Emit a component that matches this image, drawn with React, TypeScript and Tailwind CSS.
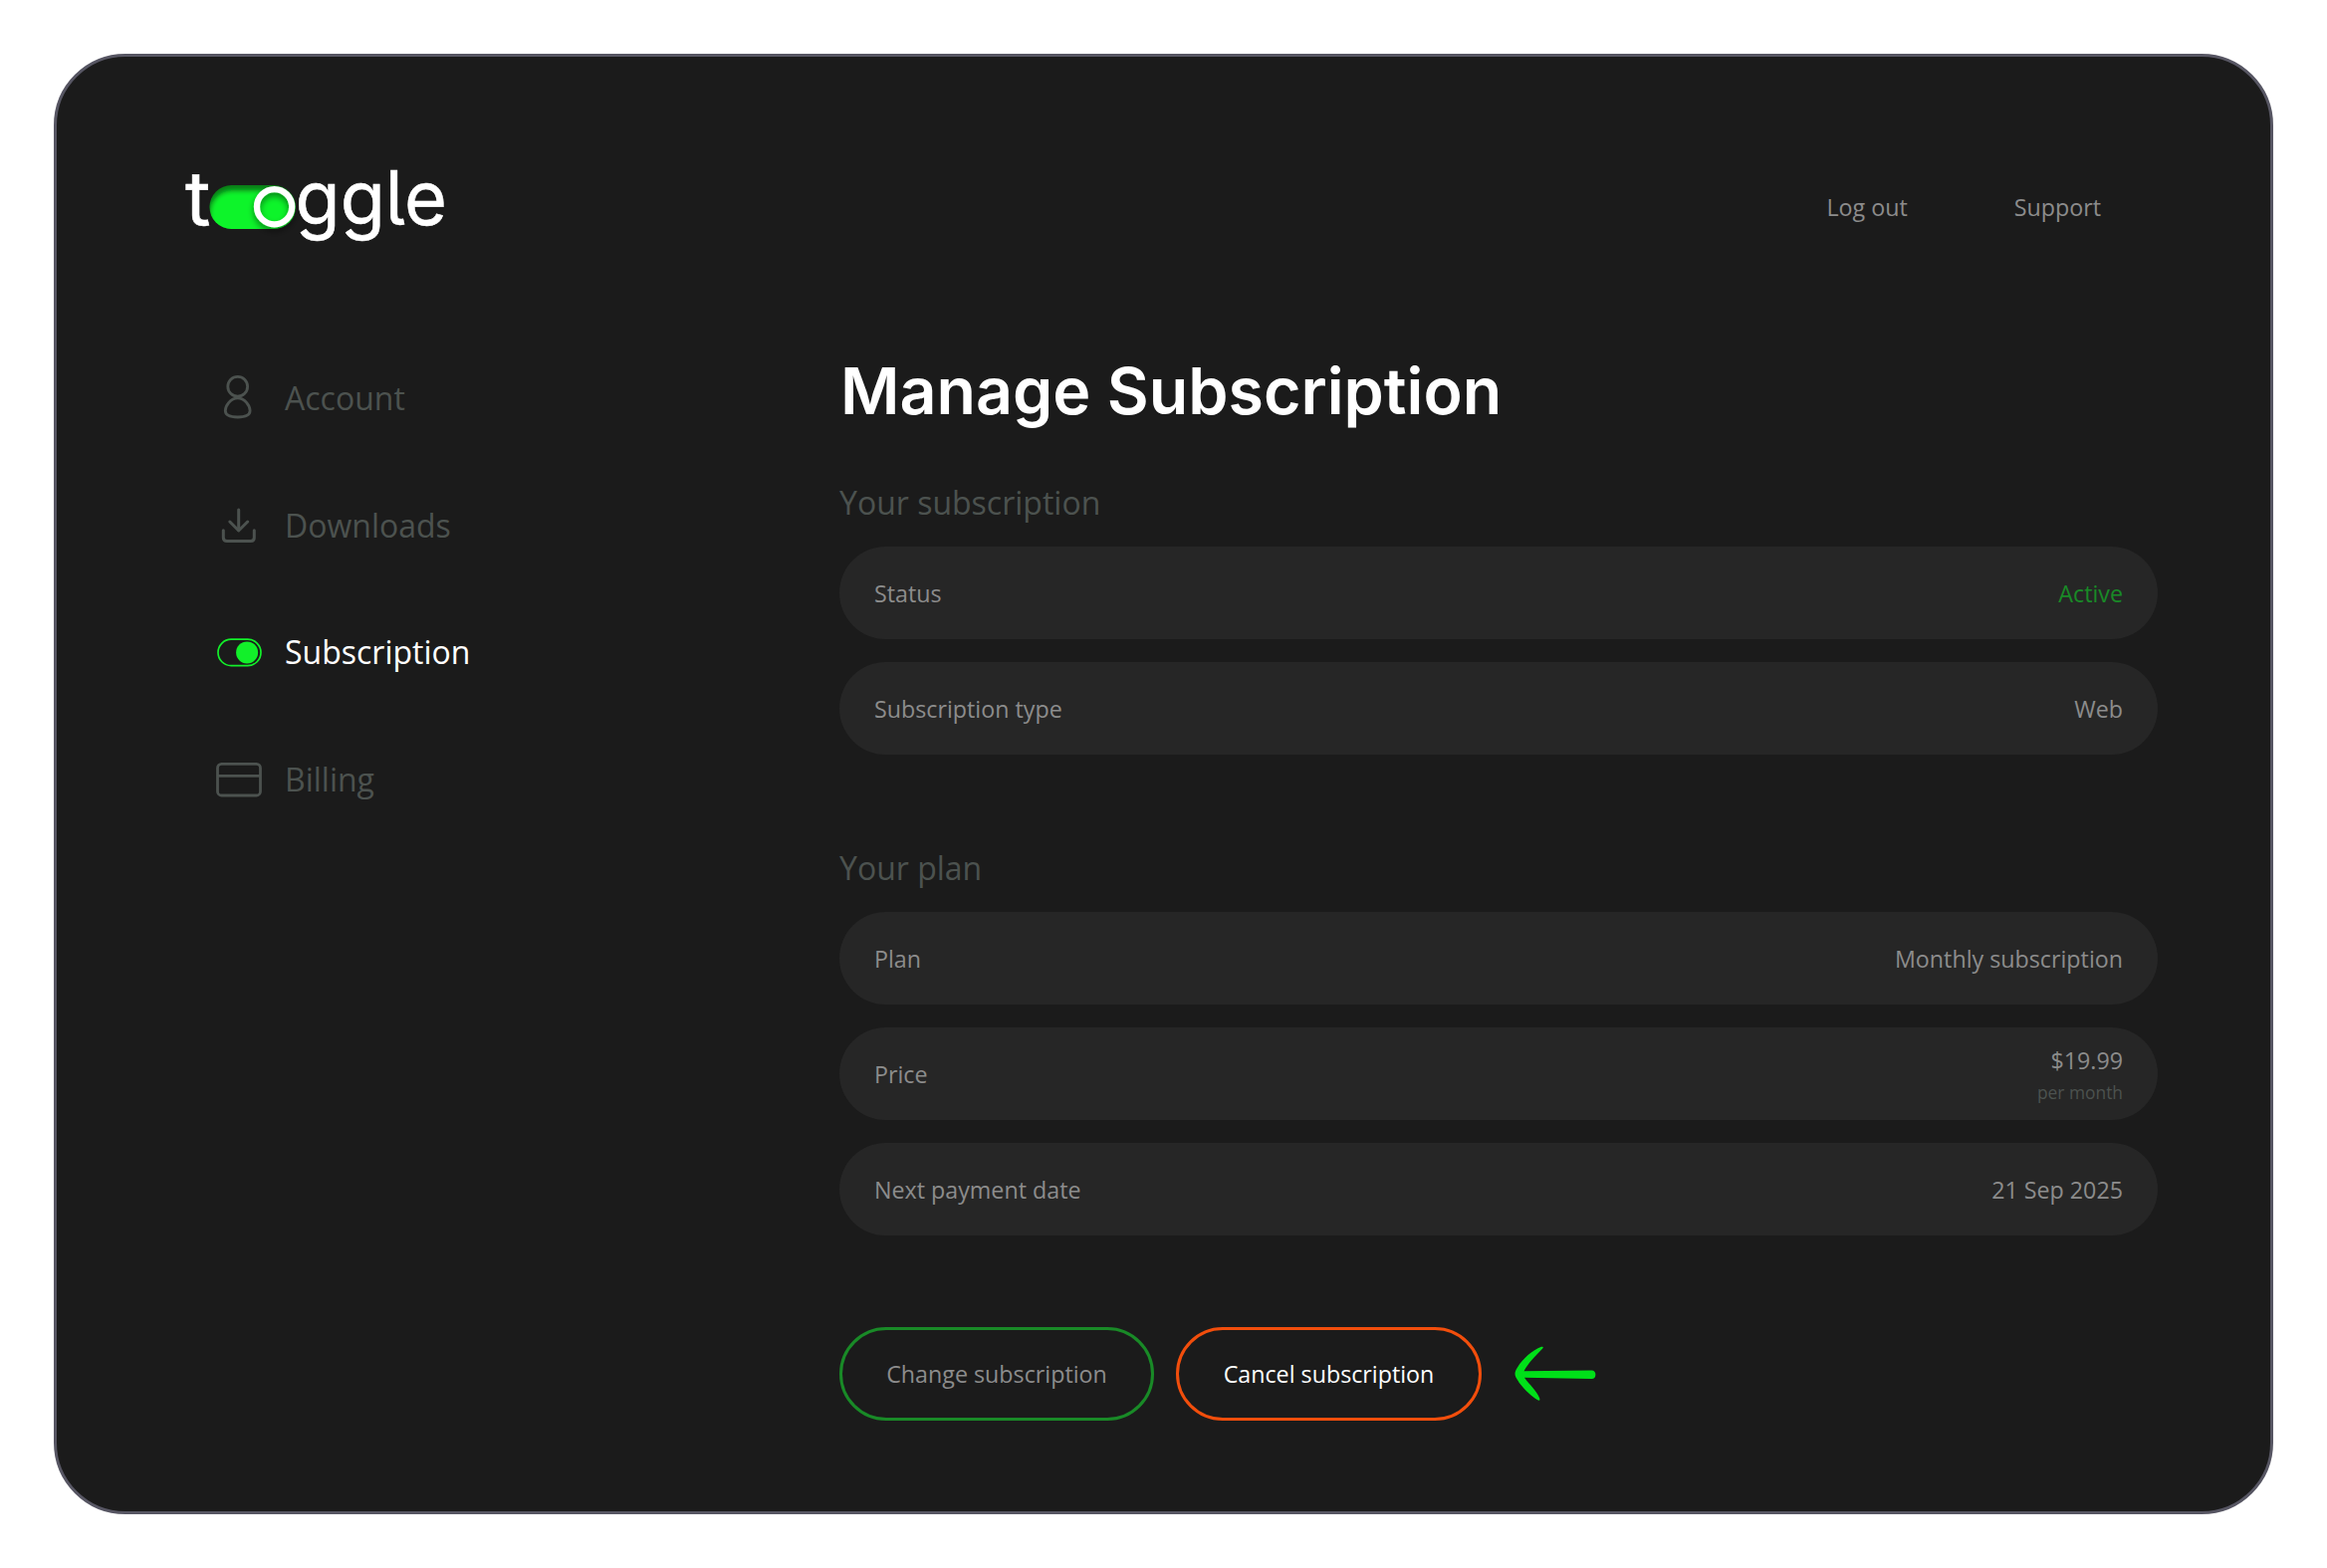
import type { ReactNode } from 'react'

interface NavItemProps {
  icon: ReactNode
  label: string
  active?: boolean
}

interface DetailRowProps {
  label: string
  value: string
  hint?: string
  highlight?: boolean
}

const Logo = () => (
  <svg width="320" height="110" viewBox="0 0 320 110" role="img" aria-label="toggle">
    <defs>
      <clipPath id="pillClip">
        <rect x="50.5" y="36" width="86.500" height="44" rx="22" />
      </clipPath>
      <filter id="innerBlur" x="-20%" y="-40%" width="140%" height="180%">
        <feGaussianBlur stdDeviation="2.6" />
      </filter>
      <filter id="knobShadow" x="-50%" y="-50%" width="200%" height="200%">
        <feDropShadow dx="0" dy="4" stdDeviation="3" floodColor="#000" floodOpacity="0.45" />
      </filter>
    </defs>
    {/* Track with an inner shadow falling from the top edge */}
    <g clipPath="url(#pillClip)">
      <rect x="50" y="36" width="87" height="44" fill="#0a7d17" />
      <rect x="51" y="41.500" width="86" height="48" rx="22" fill="#11f42b" filter="url(#innerBlur)" />
    </g>
    <circle cx="115.6" cy="57.7" r="17.6" fill="none" stroke="#fff" strokeWidth="6.2" filter="url(#knobShadow)" />
    <g
      fill="#fff"
      stroke="#fff"
      strokeWidth="0.5"
      fontSize="76"
      className="font-[Inter,sans-serif]"
      style={{ fontFeatureSettings: '"cv05"' }}
    >
      <text x="26" y="76.4" textLength="25.5" lengthAdjust="spacingAndGlyphs">
        t
      </text>
      <text x="136.5" y="76.4" textLength="152.5" lengthAdjust="spacingAndGlyphs">
        ggle
      </text>
    </g>
  </svg>
)

const AccountIcon = () => (
  <svg width="46" height="48" viewBox="0 0 46 48" fill="none" stroke="currentColor" strokeWidth="2.8">
    <circle cx="21.7" cy="12.2" r="9.9" />
    <path d="M21.7 23.8C14.5 23.8 9.3 31.6 9.3 36.6C9.3 41.2 14.5 43 21.7 43C28.9 43 34.1 41.2 34.1 36.6C34.1 31.6 28.9 23.8 21.7 23.8Z" />
  </svg>
)

const DownloadIcon = () => (
  <svg
    width="46"
    height="48"
    viewBox="0 0 46 48"
    fill="none"
    stroke="currentColor"
    strokeWidth="3"
    strokeLinecap="round"
    strokeLinejoin="round"
  >
    <path d="M22.7 7.9V28.4" />
    <path d="M13.8 20L22.7 29L31.7 20" />
    <path d="M7.3 28.7V36C7.3 38.2 8.9 39.6 11 39.6H34.6C36.8 39.6 38.3 38.2 38.3 36V28.7" />
  </svg>
)

const ToggleIcon = () => (
  <svg width="46" height="46" viewBox="0 0 46 46" fill="none">
    <rect x="2" y="10.2" width="43" height="26.4" rx="13.2" stroke="#12f02a" strokeWidth="1.7" />
    <circle cx="31.1" cy="23.4" r="11" fill="#12f02a" />
  </svg>
)

const CardIcon = () => (
  <svg width="46" height="46" viewBox="0 0 46 46" fill="none" stroke="currentColor" strokeWidth="2.8">
    <rect x="1.5" y="7.4" width="43" height="31.6" rx="4" />
    <path d="M1.5 19.4H44.5" />
  </svg>
)

const ArrowIcon = () => (
  <svg width="82" height="56" viewBox="0 0 82 56" fill="#00e019">
    <path d="M27 .8C29 .2 29.4 1.4 28 2.8C21 10 13.5 17.5 9.5 25.2L77.5 24.6C80 24.6 81.4 26.3 81.4 28.8C81.4 31.6 80 33 77.5 33L10 31.8C15 39 22 44.5 25 52C26 54.5 25.2 55.3 23.2 54.2C14 48.5 5 38.5 1.3 31.2C.2 28.9 .2 26.5 1.5 24C6.5 14.5 17 4.5 27 .8Z" />
  </svg>
)

const NavItem = ({ icon, label, active }: NavItemProps) => (
  <a
    className={`flex h-[127.7px] items-center gap-[23px] text-[32px] ${
      active ? 'text-white' : 'text-[#4c524f]'
    }`}
  >
    {icon}
    <span>{label}</span>
  </a>
)

const SectionTitle = ({ children }: { children: ReactNode }) => (
  <h2 className="text-[32px] leading-[44px] text-[#4c524f]">{children}</h2>
)

const DetailRow = ({ label, value, hint, highlight }: DetailRowProps) => (
  <div className="flex h-[93px] items-center justify-between rounded-full bg-[#262626] px-[35px] leading-[38px]">
    <span>{label}</span>
    <div className="flex flex-col items-end">
      <span className={highlight ? 'text-[#198a27]' : ''}>{value}</span>
      {hint && <span className="text-[17.4px] leading-[27px] text-[#4c524f]">{hint}</span>}
    </div>
  </div>
)

export default function App() {
  return (
    <div className="h-[1575px] w-[2337px] bg-white p-[54px] font-['Open_Sans',sans-serif]">
      <div className="h-[1467px] w-[2229px] rounded-[72px] border-3 border-[#565562] bg-[#1b1b1b] text-[23.25px] text-[#8c8c8c]">
        <header className="flex items-start justify-between pt-[93px] pr-[170px] pl-[103px]">
          <Logo />
          <nav className="flex gap-[107px] pt-[41px] leading-[34px]">
            <a>Log out</a>
            <a>Support</a>
          </nav>
        </header>

        <div className="flex pl-[160px]">
          <aside className="w-[626px] pt-[76px]">
            <NavItem icon={<AccountIcon />} label="Account" />
            <NavItem icon={<DownloadIcon />} label="Downloads" />
            <NavItem icon={<ToggleIcon />} label="Subscription" active />
            <NavItem icon={<CardIcon />} label="Billing" />
          </aside>

          <main className="w-[1324px] pt-[93px]">
            <h1 className="pl-px font-[Inter,sans-serif] text-[64.5px] leading-[80px] font-semibold whitespace-nowrap text-white">
              Manage Subscription
            </h1>

            <section className="mt-[50px]">
              <SectionTitle>Your subscription</SectionTitle>
              <div className="mt-[22px] flex flex-col gap-[23px]">
                <DetailRow label="Status" value="Active" highlight />
                <DetailRow label="Subscription type" value="Web" />
              </div>
            </section>

            <section className="mt-[92px]">
              <SectionTitle>Your plan</SectionTitle>
              <div className="mt-[22px] flex flex-col gap-[23px]">
                <DetailRow label="Plan" value="Monthly subscription" />
                <DetailRow label="Price" value="$19.99" hint="per month" />
                <DetailRow label="Next payment date" value="21 Sep 2025" />
              </div>
            </section>

            <div className="mt-[92px] flex items-center leading-[38px]">
              <button className="h-[94px] w-[316px] rounded-full border-3 border-[#198a27]">
                Change subscription
              </button>
              <button className="ml-[22px] h-[94px] w-[307px] rounded-full border-3 border-[#f24e0c] text-white">
                Cancel subscription
              </button>
              <div className="ml-[33px]">
                <ArrowIcon />
              </div>
            </div>
          </main>
        </div>
      </div>
    </div>
  )
}
